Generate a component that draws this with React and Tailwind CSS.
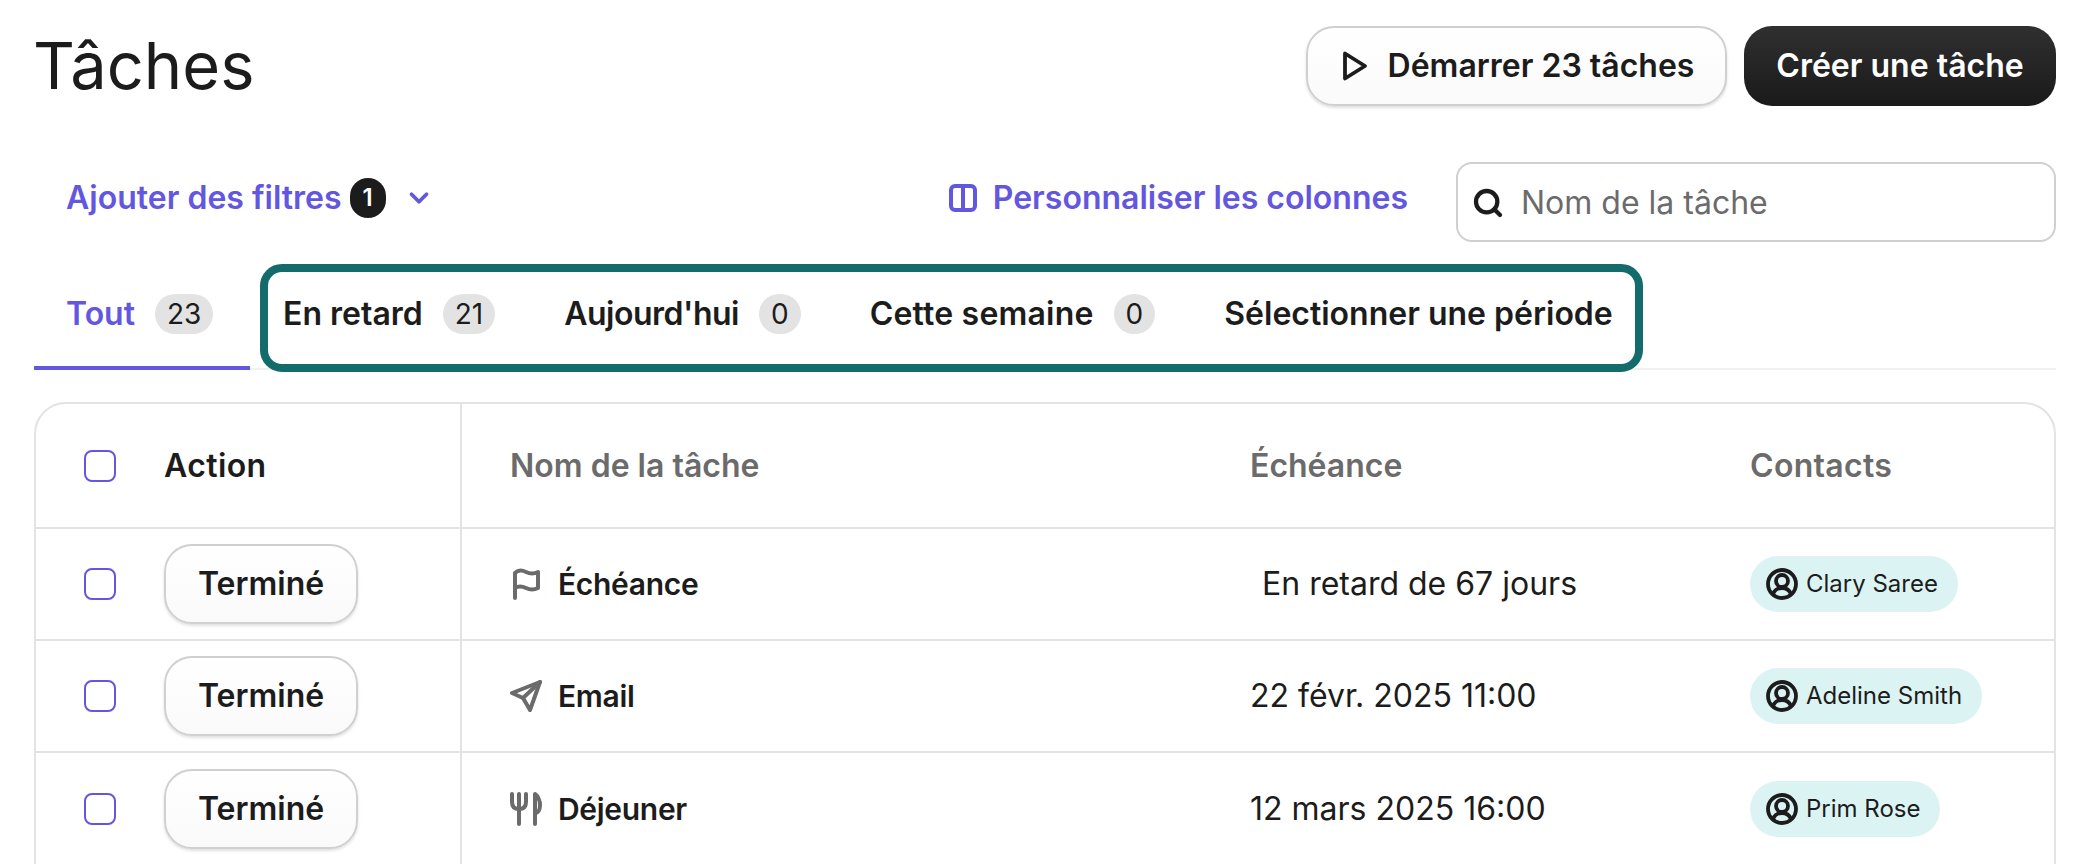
import React from "react";
import { Search, ChevronDown } from "lucide-react";

const FONT = "font-['Inter','Liberation_Sans',sans-serif]";

function Check() {
  return <div className="w-8 h-8 rounded-lg border-2 border-[#6357e0] shrink-0" />;
}

function Badge({ children }) {
  return (
    <span className="h-10 px-3 rounded-[20px] bg-[#e3e3e3] flex items-center justify-center text-[28px] font-normal text-[#1c1c1c]">
      {children}
    </span>
  );
}

function Tab({ label, count, active, labelClass }) {
  return (
    <div className={"flex items-start pt-[39px] h-[115px] " + (active ? "w-[216px] pl-[32px] border-b-4 border-[#6357e0]" : "pl-[33px] pr-[36px]")}>
      <div className={"flex items-center gap-5 h-10 text-[32px] font-semibold " + (active ? "text-[#6357e0]" : "text-[#1c1c1c]")}>
        <span className={"whitespace-nowrap " + (labelClass || "")}>{label}</span>
        {count !== undefined && <Badge>{count}</Badge>}
      </div>
    </div>
  );
}

function FlagIcon() {
  return (
    <svg className="ml-[2px]" width="28" height="32" viewBox="0 0 28 32" fill="none" stroke="#6b6b6b" strokeWidth="4" strokeLinecap="round" strokeLinejoin="round">
      <path d="M3 30V5C6 2 10 2 14 4C18 6 22 6 26 4V20C22 22 18 22 14 20C10 18 6 18 3 20" />
    </svg>
  );
}

function SendIcon() {
  return (
    <svg width="32" height="32" viewBox="0 0 32 32" fill="none" stroke="#6b6b6b" strokeWidth="4" strokeLinecap="round" strokeLinejoin="round">
      <path d="M30 2L2 13L13 18L20 30L30 2Z" />
      <path d="M30 2L13 18" />
    </svg>
  );
}

function ForkIcon() {
  return (
    <svg width="32" height="34" viewBox="0 0 32 34" fill="none" stroke="#6b6b6b" strokeWidth="4" strokeLinecap="round" strokeLinejoin="round">
      <path d="M2 2V10C2 15 5 17 9 17C13 17 16 15 16 10V2" />
      <path d="M9 2V32" />
      <path d="M25 32V2C28 4 30 9 30 13C30 18 28 21 25 21" />
    </svg>
  );
}

function ContactIcon() {
  return (
    <svg width="32" height="32" viewBox="0 0 32 32" fill="none" stroke="#1c1c1c" strokeWidth="3.8" className="shrink-0">
      <circle cx="16" cy="16" r="14" />
      <circle cx="16" cy="13" r="6" />
      <path d="M7 26C9 21 12 20 16 20C20 20 23 21 25 26" />
    </svg>
  );
}

function Chip({ name }) {
  return (
    <div className="h-14 pl-4 pr-5 rounded-[28px] bg-[#dbf4f3] inline-flex items-center gap-2 text-2xl text-[#1c1c1c] whitespace-nowrap">
      <ContactIcon />
      <span>{name}</span>
    </div>
  );
}

function Row({ icon, name, date, contact, last, dateClass }) {
  return (
    <div className={"grid grid-cols-[426px_740px_500px_1fr] h-[112px] " + (last ? "" : "border-b-2 border-[#e3e3e3]")}>
      <div className="flex items-center border-r-2 border-[#e3e3e3] pl-12 gap-12">
        <Check />
        <button className="w-[194px] h-20 rounded-[28px] border-2 border-[#d0d0d0] bg-gradient-to-b from-white to-[#fafafa] shadow-[0_2px_3px_rgba(0,0,0,0.12)] text-[32px] font-semibold text-[#1c1c1c]">
          Terminé
        </button>
      </div>
      <div className="flex items-center pl-12 gap-4 text-[30px] tracking-[-0.3px] font-semibold text-[#1c1c1c]">
        <span className="w-8 flex justify-start shrink-0">{icon}</span>
        <span>{name}</span>
      </div>
      <div className={"flex items-center text-[32px] text-[#1c1c1c] whitespace-pre " + (dateClass || "pl-12")}>{date}</div>
      <div className="flex items-center pl-12"><Chip name={contact} /></div>
    </div>
  );
}

export default function App() {
  return (
    <div className={"h-[864px] overflow-hidden bg-white pl-[34px] pr-6 pt-[26px] text-[#1c1c1c] " + FONT}>
      <header className="flex items-center justify-between h-20">
        <h1 className="text-[65px] leading-none font-normal -mt-[1px] -ml-[1px]">Tâches</h1>
        <div className="flex items-center gap-[17px]">
          <button className="h-20 w-[421px] rounded-[28px] border-2 border-[#d0d0d0] bg-gradient-to-b from-white to-[#fafafa] shadow-[0_2px_3px_rgba(0,0,0,0.12)] flex items-center justify-center gap-5 pl-[3px] text-[32px] font-semibold">
            <svg width="26" height="30" viewBox="0 0 26 30" fill="none" stroke="#1c1c1c" strokeWidth="3.8" strokeLinejoin="round">
              <path d="M3 2.5L23 15L3 27.5Z" />
            </svg>
            <span>Démarrer 23 tâches</span>
          </button>
          <button className="h-20 w-[312px] rounded-[28px] bg-gradient-to-b from-[#303030] to-[#1a1a1a] text-white text-[32px] font-semibold">
            Créer une tâche
          </button>
        </div>
      </header>

      <div className="flex items-center justify-between h-20 mt-14">
        <div className="flex items-center pl-8 pb-2 text-[32px] font-semibold text-[#6357e0]">
          <span>Ajouter des filtres</span>
          <span className="ml-2 w-9 h-10 rounded-full bg-[#1c1c1c] text-white text-2xl flex items-center justify-center">1</span>
          <ChevronDown className="ml-[18px]" size={30} strokeWidth={3} />
        </div>
        <div className="flex items-center">
          <div className="flex items-center gap-[16px] pb-2 text-[32px] font-semibold text-[#6357e0]">
            <svg width="28" height="28" viewBox="0 0 28 28" fill="none" stroke="#6357e0" strokeWidth="4">
              <rect x="2" y="2" width="24" height="24" rx="4" />
              <path d="M14 2V26" />
            </svg>
            <span>Personnaliser les colonnes</span>
          </div>
          <div className="ml-12 w-[600px] h-20 rounded-2xl border-2 border-[#d0d0d0] flex items-center pl-[14px] pt-[2px] gap-[17px] text-[32px] text-[#6b6b6b]">
            <Search size={32} strokeWidth={3.2} className="text-[#1c1c1c]" />
            <span>Nom de la tâche</span>
          </div>
        </div>
      </div>

      <div className="relative mt-[13px] flex h-[115px] border-b-2 border-[#f0f0f0] box-border">
        <div className="flex h-[115px]">
          <Tab label="Tout" count="23" active />
          <Tab label="En retard" count="21" />
          <Tab label="Aujourd'hui" count="0" labelClass="tracking-[-0.5px]" />
          <Tab label="Cette semaine" count="0" labelClass="tracking-[0.2px]" />
          <Tab label="Sélectionner une période" />
        </div>
        <div className="absolute left-[226px] top-[9px] w-[1383px] h-[108px] border-8 border-[#136b6b] rounded-[22px]" />
      </div>

      <div className="mt-[32px] rounded-t-[32px] border-2 border-[#e3e3e3]">
        <div className="grid grid-cols-[426px_740px_500px_1fr] h-[125px] border-b-2 border-[#e3e3e3] text-[32px] font-semibold text-[#6b6b6b]">
          <div className="flex items-center border-r-2 border-[#e3e3e3] pl-12 gap-12">
            <Check />
            <span className="text-[#1c1c1c] tracking-[0.4px]">Action</span>
          </div>
          <div className="flex items-center pl-12">Nom de la tâche</div>
          <div className="flex items-center pl-12">Échéance</div>
          <div className="flex items-center pl-12 tracking-[0.3px]">Contacts</div>
        </div>
        <Row icon={<FlagIcon />} name="Échéance" date=" En retard de 67 jours" contact="Clary Saree" dateClass="pl-[51px]" />
        <Row icon={<SendIcon />} name="Email" date="22 févr. 2025 11:00" contact="Adeline Smith" />
        <Row icon={<ForkIcon />} name="Déjeuner" date="12 mars 2025 16:00" contact="Prim Rose" last />
      </div>
    </div>
  );
}
